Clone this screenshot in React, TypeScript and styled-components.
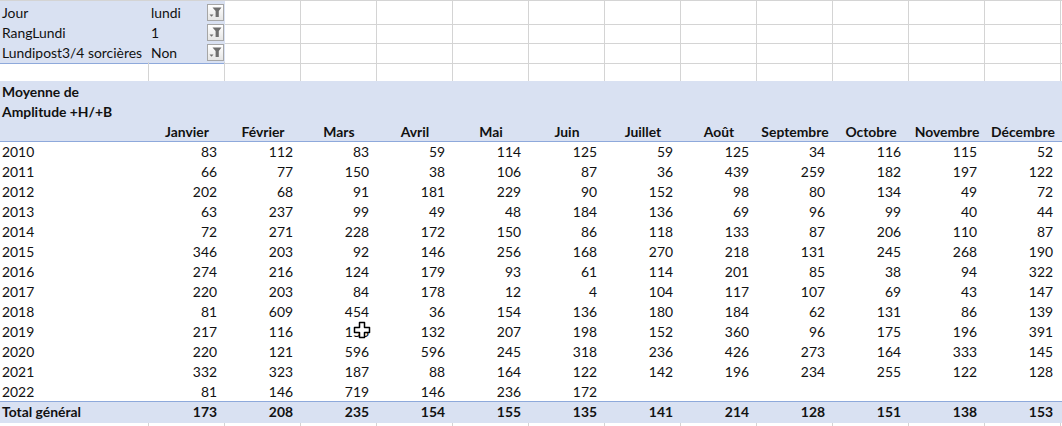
import styled, { createGlobalStyle } from 'styled-components'

const MONTHS = ['Janvier', 'Février', 'Mars', 'Avril', 'Mai', 'Juin', 'Juillet', 'Août', 'Septembre', 'Octobre', 'Novembre', 'Décembre']

const YEARS: [string, number[]][] = [
  ['2010', [83, 112, 83, 59, 114, 125, 59, 125, 34, 116, 115, 52]],
  ['2011', [66, 77, 150, 38, 106, 87, 36, 439, 259, 182, 197, 122]],
  ['2012', [202, 68, 91, 181, 229, 90, 152, 98, 80, 134, 49, 72]],
  ['2013', [63, 237, 99, 49, 48, 184, 136, 69, 96, 99, 40, 44]],
  ['2014', [72, 271, 228, 172, 150, 86, 118, 133, 87, 206, 110, 87]],
  ['2015', [346, 203, 92, 146, 256, 168, 270, 218, 131, 245, 268, 190]],
  ['2016', [274, 216, 124, 179, 93, 61, 114, 201, 85, 38, 94, 322]],
  ['2017', [220, 203, 84, 178, 12, 4, 104, 117, 107, 69, 43, 147]],
  ['2018', [81, 609, 454, 36, 154, 136, 180, 184, 62, 131, 86, 139]],
  ['2019', [217, 116, 156, 132, 207, 198, 152, 360, 96, 175, 196, 391]],
  ['2020', [220, 121, 596, 596, 245, 318, 236, 426, 273, 164, 333, 145]],
  ['2021', [332, 323, 187, 88, 164, 122, 142, 196, 234, 255, 122, 128]],
  ['2022', [81, 146, 719, 146, 236, 172]],
]

const TOTALS = [173, 208, 235, 154, 155, 135, 141, 214, 128, 151, 138, 153]

const FILTERS = [
  ['Jour', 'lundi'],
  ['RangLundi', '1'],
  ['Lundipost3/4 sorcières', 'Non'],
]

const GRID = '149px repeat(12, 76px) 1fr'

const GlobalStyle = createGlobalStyle`
  html, body {
    margin: 0;
    background: #fff;
    overflow: hidden;
  }
`

const Sheet = styled.div`
  position: relative;
  width: 1062px;
  height: 426px;
  overflow: hidden;
  border-top: 1px solid #d4d4d4;
  box-sizing: border-box;
  font-family: Lato, 'Liberation Sans', sans-serif;
  font-size: 13.9px;
  color: #111;
`

const FilterRow = styled.div`
  display: grid;
  grid-template-columns: 149px 76px 1fr;
  height: 20px;
  line-height: 21px;
  &:first-child {
    height: 21px;
    line-height: 23px;
  }
`

const FilterLabel = styled.div<{ $last: boolean }>`
  background: #d9e1f2;
  padding-left: 2px;
  white-space: nowrap;
  box-sizing: border-box;
  border-bottom: 1px solid ${(p) => (p.$last ? '#8ea9db' : '#d9e1f2')};
`

const FilterValue = styled(FilterLabel)`
  display: flex;
  justify-content: space-between;
  align-items: center;
  padding-left: 2px;
  padding-right: 1px;
`

const FilterButton = styled.span`
  display: flex;
  align-items: center;
  justify-content: center;
  width: 17px;
  height: 17px;
  box-sizing: border-box;
  border: 1px solid #a6a6a6;
  background: linear-gradient(#ffffff, #e6e6e6);
`

const EmptyCells = styled.div`
  display: grid;
  grid-template-columns: repeat(11, 76px) 1fr;
  border-bottom: 1px solid #d4d4d4;
`

const GridCell = styled.div`
  border-right: 1px solid #d4d4d4;
`

const BlankRow = styled.div<{ $height: number }>`
  display: grid;
  grid-template-columns: ${GRID};
  height: ${(p) => p.$height}px;
`

const PivotHead = styled.div`
  background: #d9e1f2;
  border-bottom: 1px solid #8ea9db;
  font-weight: 700;
`

const HeadLine = styled.div`
  height: 20px;
  line-height: 22px;
  padding-left: 2px;
`

const Row = styled.div<{ $total?: boolean; $head?: boolean }>`
  display: grid;
  grid-template-columns: ${GRID};
  height: 20px;
  line-height: ${(p) => (p.$head ? '22px' : '19px')};
  ${(p) =>
    p.$total &&
    `
    height: 21px;
    background: #d9e1f2;
    font-weight: 700;
    box-shadow: 0 -1px 0 #8ea9db;
    position: relative;
  `}
`

const RowLabel = styled.div`
  padding-left: 2px;
`

const MonthCell = styled.div`
  text-align: center;
  white-space: nowrap;
`

const NumberCell = styled.div`
  text-align: right;
  padding-right: 8px;
`

const Cursor = styled.svg`
  position: absolute;
  left: 353px;
  top: 320px;
`

const FilterIcon = () => (
  <svg width="13" height="11" viewBox="0 0 13 11">
    <path d="M3.5 0.5h9L9.8 4v6H6.6V4z" fill="#6f6f6f" />
    <path d="M0.5 7.5h4L2.5 9.8z" fill="#6f6f6f" />
  </svg>
)

export default function App() {
  return (
    <Sheet>
      <GlobalStyle />
      {FILTERS.map(([label, value], i) => (
        <FilterRow key={label}>
          <FilterLabel $last={i === 2}>{label}</FilterLabel>
          <FilterValue $last={i === 2}>
            {value}
            <FilterButton>
              <FilterIcon />
            </FilterButton>
          </FilterValue>
          <EmptyCells>
            {Array.from({ length: 11 }).map((_, c) => (
              <GridCell key={c} />
            ))}
          </EmptyCells>
        </FilterRow>
      ))}
      <BlankRow $height={19}>
        {Array.from({ length: 13 }).map((_, c) => (
          <GridCell key={c} />
        ))}
      </BlankRow>
      <PivotHead>
        <HeadLine>Moyenne de</HeadLine>
        <HeadLine>Amplitude +H/+B</HeadLine>
        <Row $head>
          <div />
          {MONTHS.map((m) => (
            <MonthCell key={m}>{m}</MonthCell>
          ))}
        </Row>
      </PivotHead>
      {YEARS.map(([year, values]) => (
        <Row key={year}>
          <RowLabel>{year}</RowLabel>
          {values.map((v, c) => (
            <NumberCell key={c}>{v}</NumberCell>
          ))}
        </Row>
      ))}
      <Row $total>
        <RowLabel>Total général</RowLabel>
        {TOTALS.map((v, c) => (
          <NumberCell key={c}>{v}</NumberCell>
        ))}
      </Row>
      <BlankRow $height={6}>
        {Array.from({ length: 13 }).map((_, c) => (
          <GridCell key={c} />
        ))}
      </BlankRow>
      <Cursor width="18" height="18" viewBox="0 0 18 18">
        <path
          d="M6.5 1.5h5v5h5v5h-5v5h-5v-5h-5v-5h5z"
          fill="#fff"
          stroke="#000"
          strokeWidth="1.5"
          strokeLinejoin="round"
        />
      </Cursor>
    </Sheet>
  )
}
